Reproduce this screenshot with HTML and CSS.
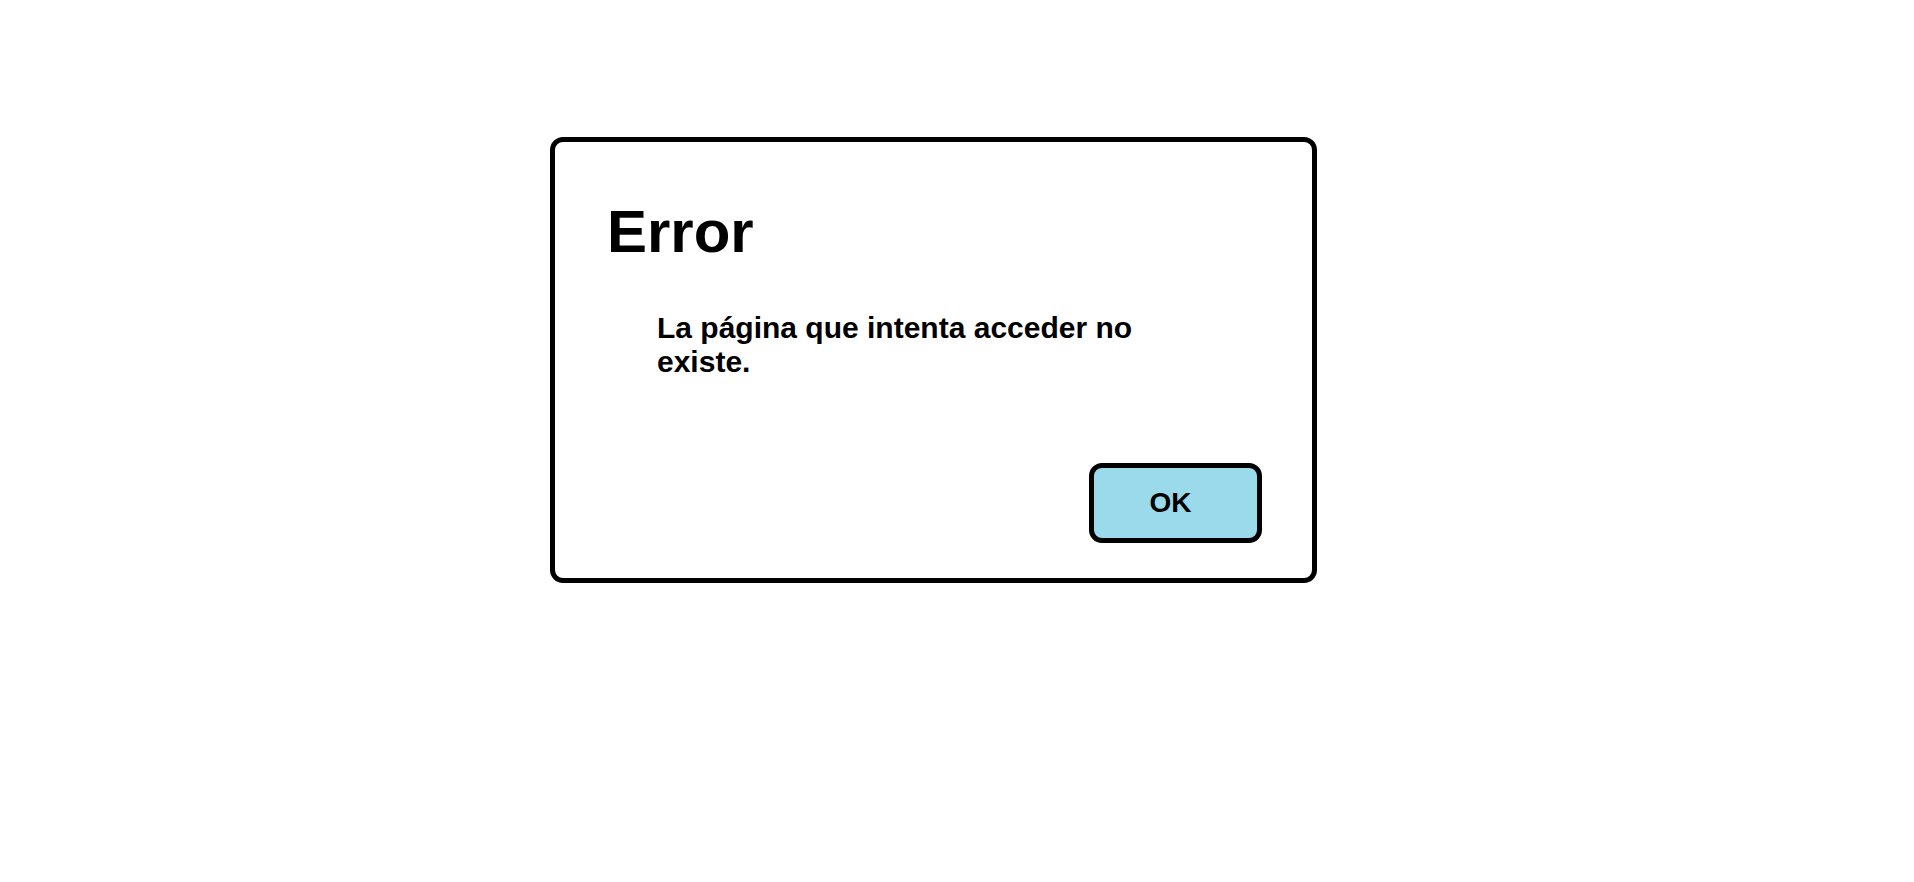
FILE: index.html
```html
<!DOCTYPE html>
<html lang="es">
<head>
<meta charset="utf-8">
<title>Error</title>
<link rel="stylesheet" href="styles.css">
</head>
<body>
  <div class="dialog">
    <h1 class="title">Error</h1>
    <p class="message">La página que intenta acceder no existe.</p>
    <div class="actions">
      <button class="ok-btn" type="button">OK</button>
    </div>
  </div>
</body>
</html>
```

FILE: styles.css
```css
html, body {
  margin: 0;
  padding: 0;
  background: #ffffff;
}

body {
  font-family: "Liberation Sans", Arial, sans-serif;
  color: #000000;
}

.dialog {
  box-sizing: border-box;
  width: 767px;
  height: 446px;
  margin: 137px 0 0 550px;
  border: 5px solid #000000;
  border-radius: 13px;
  padding: 55px 50px 35px 52px;
  display: flex;
  flex-direction: column;
  background: #ffffff;
}

.title {
  margin: 0;
  font-size: 60px;
  font-weight: bold;
  line-height: normal;
}

.message {
  margin: 45px 0 0 50px;
  width: 500px;
  font-size: 30px;
  font-weight: bold;
  line-height: normal;
}

.actions {
  margin-top: auto;
  display: flex;
  justify-content: flex-end;
}

.ok-btn {
  box-sizing: border-box;
  width: 173px;
  height: 80px;
  border: 5px solid #000000;
  border-radius: 13px;
  background: #9bdaeb;
  font-family: "Liberation Sans", Arial, sans-serif;
  font-size: 28px;
  font-weight: bold;
  color: #000000;
  padding: 0 10px 0 0;
  cursor: pointer;
}
```
